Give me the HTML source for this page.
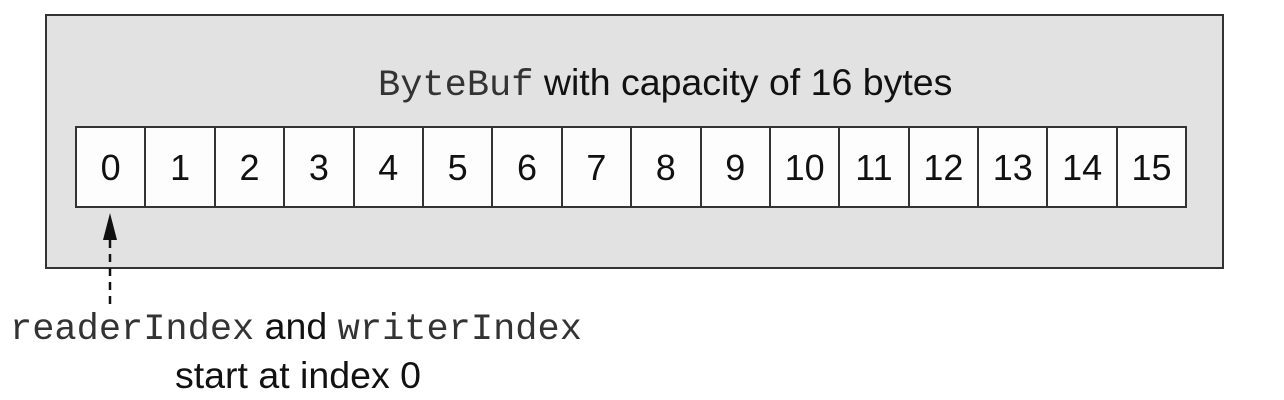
<!DOCTYPE html>
<html><head><style>
body{margin:0;width:1284px;height:400px;background:#fff;position:relative;overflow:hidden;font-family:"Liberation Sans",sans-serif;color:#111}
.box{position:absolute;left:45px;top:14px;width:1175px;height:251px;border:2px solid #333;background:#e2e2e2}
.cells{position:absolute;left:75px;top:126px;display:flex;border:2px solid #333;border-right:none;background:#fdfdfd}
.cells div{width:67.4px;height:78px;border-right:2px solid #333;text-align:center;line-height:80px;font-size:36px}
.mono{font-family:"Liberation Mono",monospace;font-size:37px;color:#333}
.t{position:absolute;white-space:nowrap;font-size:37.5px;line-height:42px}
</style></head><body>
<div class="box"></div>
<div class="t" style="left:378px;top:61px"><span class="mono">ByteBuf</span> with capacity of 16 bytes</div>
<div class="cells"><div>0</div><div>1</div><div>2</div><div>3</div><div>4</div><div>5</div><div>6</div><div>7</div><div>8</div><div>9</div><div>10</div><div>11</div><div>12</div><div>13</div><div>14</div><div>15</div></div>
<svg class="t" style="left:0;top:0" width="1284" height="400">
<polygon points="110,213 103,240 117,240" fill="#111"/>
<line x1="110" y1="240" x2="110" y2="306" stroke="#111" stroke-width="2.5" stroke-dasharray="8,6"/>
</svg>
<div class="t" style="left:10px;top:305px"><span class="mono">readerIndex</span> and <span class="mono">writerIndex</span></div>
<div class="t" style="left:175px;top:354px">start at index 0</div>
</body></html>
